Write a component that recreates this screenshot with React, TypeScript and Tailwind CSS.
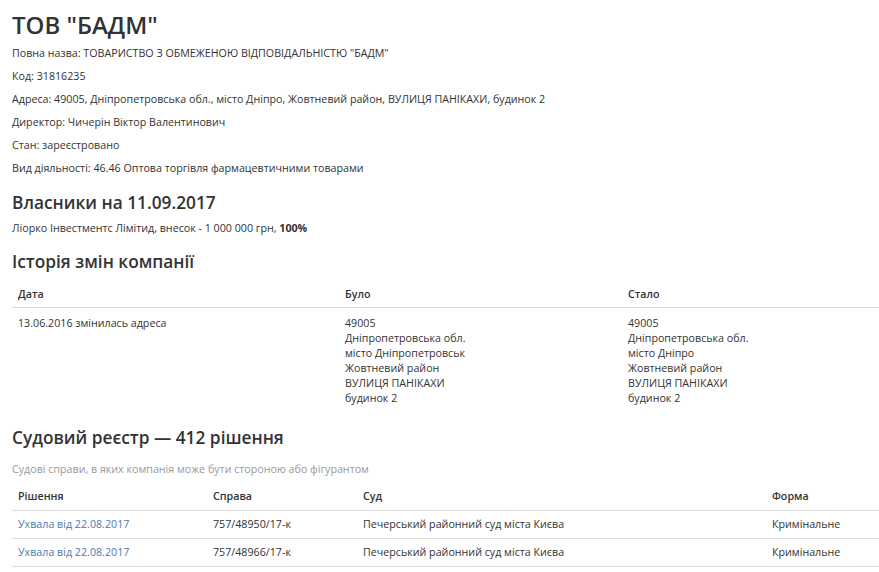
import React from "react";

const info = [
  'Повна назва: ТОВАРИСТВО З ОБМЕЖЕНОЮ ВІДПОВІДАЛЬНІСТЮ "БАДМ"',
  "Код: 31816235",
  "Адреса: 49005, Дніпропетровська обл., місто Дніпро, Жовтневий район, ВУЛИЦЯ ПАНІКАХИ, будинок 2",
  "Директор: Чичерін Віктор Валентинович",
  "Стан: зареєстровано",
  "Вид діяльності: 46.46 Оптова торгівля фармацевтичними товарами",
];

const was = ["49005", "Дніпропетровська обл.", "місто Дніпропетровськ", "Жовтневий район", "ВУЛИЦЯ ПАНІКАХИ", "будинок 2"];
const now = ["49005", "Дніпропетровська обл.", "місто Дніпро", "Жовтневий район", "ВУЛИЦЯ ПАНІКАХИ", "будинок 2"];

const cases = [
  { d: "Ухвала від 22.08.2017", n: "757/48950/17-к" },
  { d: "Ухвала від 22.08.2017", n: "757/48966/17-к" },
];

export default function App() {
  return (
    <div
      className="w-[879px] h-[572px] overflow-hidden bg-white text-[#333] pl-[12px]"
      style={{ fontFamily: '"Open Sans", "Noto Sans", sans-serif' }}
    >
      <h1 className="text-[24px] font-semibold leading-[30px] pt-[10px] text-[#333]">ТОВ "БАДМ"</h1>
      <div className="text-[10.7px] leading-[15px] mt-[6px] flex flex-col gap-[8px]">
        {info.map((t) => (
          <div key={t}>{t}</div>
        ))}
      </div>
      <h2 className="text-[17.3px] font-semibold leading-[24px] mt-[15px]">Власники на 11.09.2017</h2>
      <div className="text-[10.7px] leading-[15px] mt-[6px]">
        Ліорко Інвестментс Лімітид, внесок - 1 000 000 грн, <b>100%</b>
      </div>
      <h2 className="text-[17.3px] font-semibold leading-[24px] mt-[14px]">Історія змін компанії</h2>
      <table className="w-[867px] text-[10.7px] leading-[15px] mt-[9px] border-collapse table-fixed">
        <colgroup>
          <col className="w-[327px]" />
          <col className="w-[283px]" />
          <col />
        </colgroup>
        <thead>
          <tr className="border-b border-[#ddd]">
            <th className="text-left font-semibold px-[6px] pt-[4px] pb-[5px]">Дата</th>
            <th className="text-left font-semibold px-[6px] pt-[4px] pb-[5px]">Було</th>
            <th className="text-left font-semibold px-[6px] pt-[4px] pb-[5px]">Стало</th>
          </tr>
        </thead>
        <tbody>
          <tr>
            <td className="align-top px-[6px] pt-[8px] pb-[8px]">13.06.2016 змінилась адреса</td>
            <td className="align-top px-[6px] pt-[8px] pb-[8px]">
              {was.map((l, i) => (
                <div key={i}>{l}</div>
              ))}
            </td>
            <td className="align-top px-[6px] pt-[8px] pb-[8px]">
              {now.map((l, i) => (
                <div key={i}>{l}</div>
              ))}
            </td>
          </tr>
        </tbody>
      </table>
      <h2 className="text-[17.3px] font-semibold leading-[24px] mt-[12px]">Судовий реєстр — 412 рішення</h2>
      <div className="text-[10.7px] leading-[15px] mt-[12px] text-[#999]">
        Судові справи, в яких компанія може бути стороною або фігурантом
      </div>
      <table className="w-[867px] text-[10.7px] leading-[15px] mt-[6px] border-collapse table-fixed">
        <colgroup>
          <col className="w-[195px]" />
          <col className="w-[150px]" />
          <col className="w-[409px]" />
          <col />
        </colgroup>
        <thead>
          <tr className="border-b border-[#ddd]">
            <th className="text-left font-semibold px-[6px] pt-[6px] pb-[6px]">Рішення</th>
            <th className="text-left font-semibold px-[6px] pt-[6px] pb-[6px]">Справа</th>
            <th className="text-left font-semibold px-[6px] pt-[6px] pb-[6px]">Суд</th>
            <th className="text-left font-semibold px-[6px] pt-[6px] pb-[6px]">Форма</th>
          </tr>
        </thead>
        <tbody>
          {cases.map((c) => (
            <tr key={c.n} className="border-b border-[#ddd]">
              <td className="px-[6px] py-[6px]">
                <a className="text-[#4a7bb0]">{c.d}</a>
              </td>
              <td className="px-[6px] py-[6px]">{c.n}</td>
              <td className="px-[6px] py-[6px]">Печерський районний суд міста Києва</td>
              <td className="px-[6px] py-[6px]">Кримінальне</td>
            </tr>
          ))}
        </tbody>
      </table>
    </div>
  );
}
